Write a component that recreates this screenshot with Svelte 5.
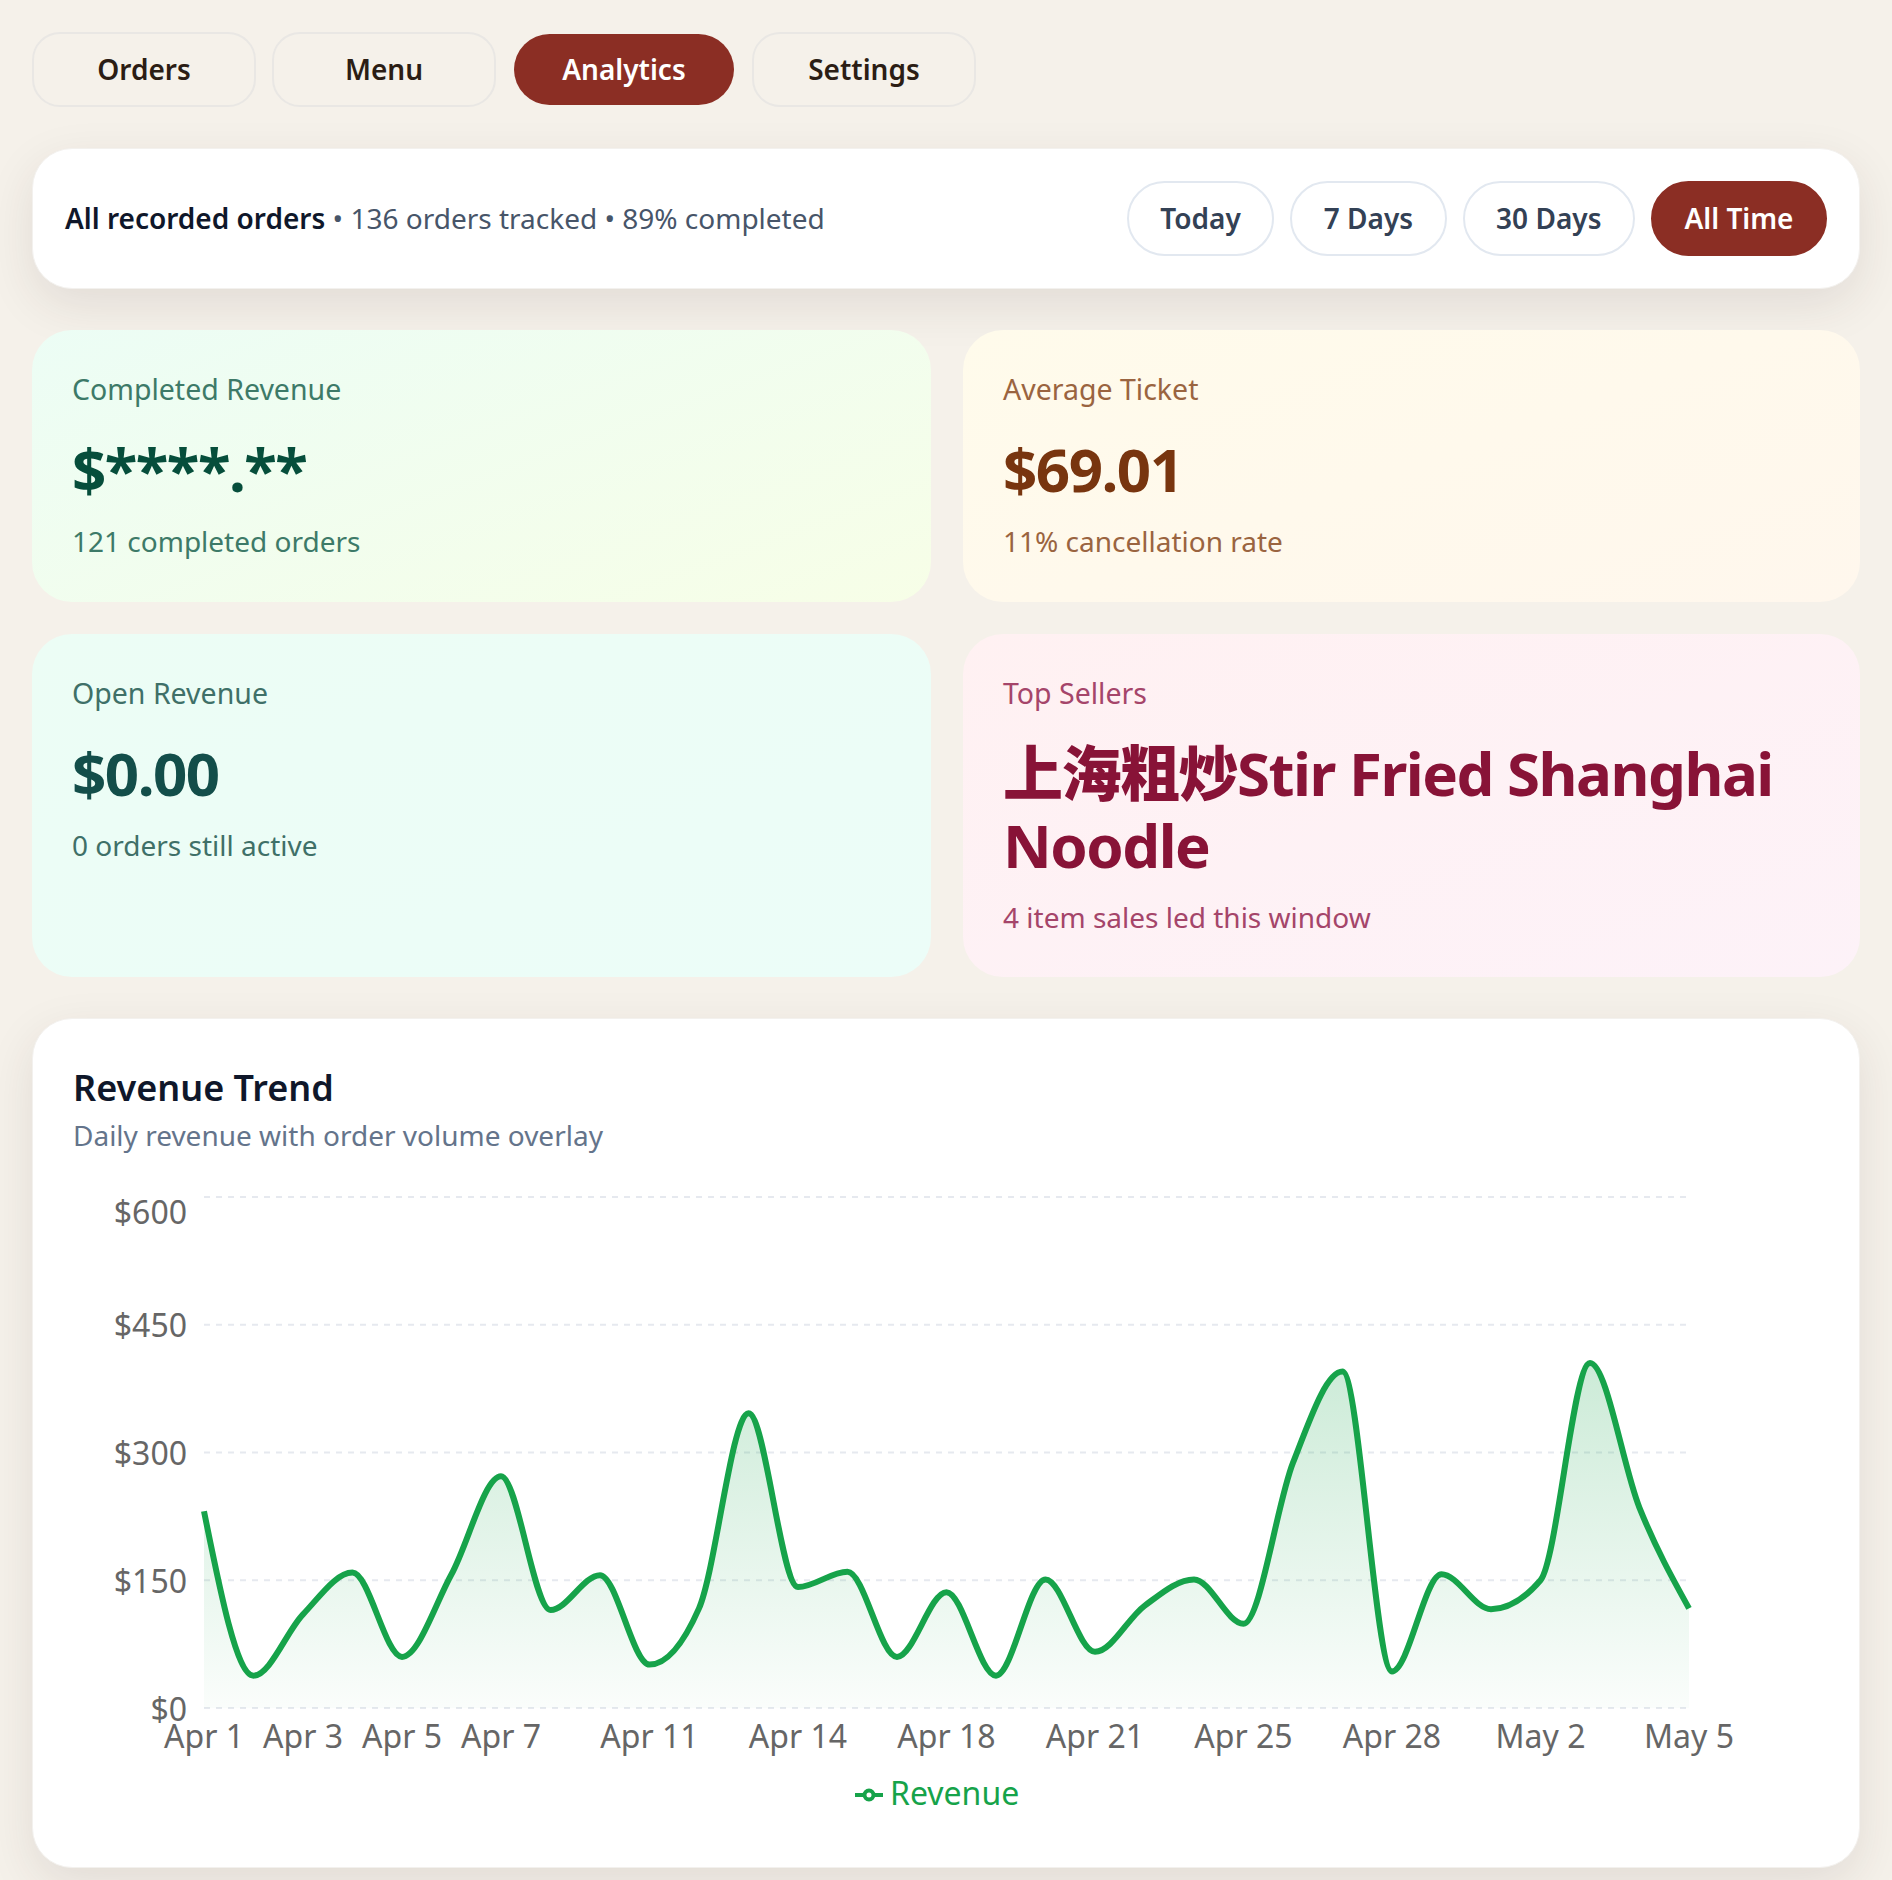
<script lang="ts">
	const tabs = ['Orders', 'Menu', 'Analytics', 'Settings'];
	const ranges = ['Today', '7 Days', '30 Days', 'All Time'];

	// daily revenue, one entry per day that had orders
	const revenue = [
		231, 38, 110, 159, 60, 157, 272, 115, 156, 51, 117, 346, 142, 160, 60, 136, 38, 151, 66, 120,
		151, 99, 288, 395, 43, 157, 116, 150, 405, 235, 117
	];
	const xLabels: Record<number, string> = {
		0: 'Apr 1',
		2: 'Apr 3',
		4: 'Apr 5',
		6: 'Apr 7',
		9: 'Apr 11',
		12: 'Apr 14',
		15: 'Apr 18',
		18: 'Apr 21',
		21: 'Apr 25',
		24: 'Apr 28',
		27: 'May 2',
		30: 'May 5'
	};
	const yTicks = [0, 150, 300, 450, 600];

	const width = 1746;
	const height = 678;
	const left = 131;
	const right = 1616;
	const top = 8;
	const bottom = 519;

	const px = (i: number) => left + ((right - left) * i) / (revenue.length - 1);
	const py = (v: number) => bottom - ((bottom - top) * v) / 600;

	// monotone-x interpolation, same as the curve recharts draws
	function monotonePath(pts: [number, number][]) {
		const n = pts.length;
		const dx = [];
		const m = [];
		for (let i = 0; i < n - 1; i++) {
			dx.push(pts[i + 1][0] - pts[i][0]);
			m.push((pts[i + 1][1] - pts[i][1]) / dx[i]);
		}
		const t = [m[0]];
		for (let i = 1; i < n - 1; i++) {
			if (m[i - 1] * m[i] <= 0) {
				t.push(0);
			} else {
				const p = (m[i - 1] * dx[i] + m[i] * dx[i - 1]) / (dx[i - 1] + dx[i]);
				t.push(
					(Math.sign(m[i - 1]) + Math.sign(m[i])) *
						Math.min(Math.abs(m[i - 1]), Math.abs(m[i]), 0.5 * Math.abs(p))
				);
			}
		}
		t[0] = (3 * m[0] - t[1]) / 2;
		t.push((3 * m[n - 2] - t[n - 2]) / 2);
		let d = `M${pts[0][0]},${pts[0][1]}`;
		for (let i = 0; i < n - 1; i++) {
			const h = dx[i] / 3;
			d += `C${pts[i][0] + h},${pts[i][1] + h * t[i]} ${pts[i + 1][0] - h},${pts[i + 1][1] - h * t[i + 1]} ${pts[i + 1][0]},${pts[i + 1][1]}`;
		}
		return d;
	}

	const line = monotonePath(revenue.map((v, i) => [px(i), py(v)]));
	const area = `${line}L${right},${bottom}L${left},${bottom}Z`;
</script>

<div class="page">
	<nav class="tabs">
		{#each tabs as tab}
			<button class="tab" class:active={tab === 'Analytics'}>{tab}</button>
		{/each}
	</nav>

	<section class="summary">
		<p class="scope"><strong>All recorded orders</strong> • 136 orders tracked • 89% completed</p>
		<div class="ranges">
			{#each ranges as range}
				<button class="range" class:active={range === 'All Time'}>{range}</button>
			{/each}
		</div>
	</section>

	<section class="stats">
		<article class="stat green">
			<div class="label">Completed Revenue</div>
			<div class="value">$****.**</div>
			<div class="note">121 completed orders</div>
		</article>
		<article class="stat amber">
			<div class="label">Average Ticket</div>
			<div class="value">$69.01</div>
			<div class="note">11% cancellation rate</div>
		</article>
		<article class="stat teal">
			<div class="label">Open Revenue</div>
			<div class="value">$0.00</div>
			<div class="note">0 orders still active</div>
		</article>
		<article class="stat pink">
			<div class="label">Top Sellers</div>
			<div class="value"><span class="cjk">上海粗炒</span>Stir Fried Shanghai Noodle</div>
			<div class="note">4 item sales led this window</div>
		</article>
	</section>

	<section class="chart-card">
		<h2>Revenue Trend</h2>
		<p class="sub">Daily revenue with order volume overlay</p>
		<svg class="chart" viewBox="0 0 {width} {height}" width={width} height={height}>
			<defs>
				<linearGradient id="revFill" x1="0" y1="0" x2="0" y2="1">
					<stop offset="0%" stop-color="#16a34a" stop-opacity="0.22" />
					<stop offset="100%" stop-color="#16a34a" stop-opacity="0.02" />
				</linearGradient>
			</defs>
			{#each yTicks as tick}
				<line class="grid" x1={left} x2={right} y1={py(tick)} y2={py(tick)} />
				<text class="tick" x={left - 17} y={tick === 600 ? py(tick) + 14 : py(tick)} text-anchor="end" dominant-baseline="central">${tick}</text>
			{/each}
			<path d={area} fill="url(#revFill)" />
			<path d={line} class="rev-line" />
			{#each Object.entries(xLabels) as [i, label]}
				<text class="tick" x={px(+i)} y={py(0) + 40} text-anchor="middle">{label}</text>
			{/each}
			<g class="legend" transform="translate(782 606)">
				<line x1="0" x2="28" y1="0" y2="0" />
				<circle cx="14" cy="0" r="4.5" />
				<text x="35" y="10">Revenue</text>
			</g>
		</svg>
	</section>
</div>

<style>
	:global(body) {
		margin: 0;
		background: #f5f1ea;
		font-family: 'Noto Sans', 'Noto Sans CJK SC', sans-serif;
	}

	.page {
		padding: 32px;
		display: flex;
		flex-direction: column;
	}

	.tabs {
		display: flex;
		gap: 16px;
		margin-bottom: 41px;
	}

	.tab {
		width: 224px;
		height: 75px;
		padding: 0 0 2px;
		border: 2px solid #e9e7e4;
		border-radius: 28px;
		background: transparent;
		color: #2b1d14;
		font: 600 28px 'Noto Sans', sans-serif;
	}

	.tab.active {
		background: #8b2e24;
		background-clip: padding-box;
		border-color: transparent;
		border-radius: 38px;
		color: #fff;
	}

	.summary {
		display: flex;
		align-items: center;
		justify-content: space-between;
		height: 141px;
		box-sizing: border-box;
		padding: 0 32px;
		background: #fff;
		border: 1px solid #f3f1ee;
		border-radius: 40px;
		box-shadow: 0 16px 48px rgba(62, 39, 35, 0.1);
		margin-bottom: 41px;
	}

	.scope {
		margin: 0 0 2px;
		font-size: 28px;
		color: #475569;
	}

	.scope strong {
		color: #0f172a;
		font-weight: 600;
	}

	.ranges {
		display: flex;
		gap: 16px;
	}

	.range {
		height: 75px;
		padding: 0 31.5px 2px;
		border: 2px solid #e2e8f0;
		border-radius: 38px;
		background: #fff;
		color: #334155;
		font: 600 28px 'Noto Sans', sans-serif;
	}

	.range.active {
		background: #8b2e24;
		border-color: #8b2e24;
		color: #fff;
	}

	.stats {
		display: grid;
		grid-template-columns: 899px 1fr;
		grid-template-rows: 272px auto;
		gap: 32px;
		margin-bottom: 41px;
	}

	.stat {
		padding: 40px;
		border-radius: 40px;
	}

	.label {
		font-size: 28.5px;
		line-height: 38px;
	}

	.value {
		margin: 25px 0 16px;
		font-size: 60px;
		font-weight: 700;
		letter-spacing: -0.025em;
		line-height: 72px;
	}

	.cjk {
		display: inline-block;
		font-weight: 800;
	}

	.note {
		font-size: 28px;
		line-height: 40px;
	}

	.green {
		background: linear-gradient(160deg, #ecfdf5, #f7fee7);
		color: #3d7a68;
	}
	.green .value {
		color: #064e3b;
	}

	.amber {
		background: linear-gradient(160deg, #fffbeb, #fff7ed);
		color: #9a6440;
	}
	.amber .value {
		color: #78350f;
	}

	.teal {
		background: linear-gradient(160deg, #ecfdf5, #ecfdf8);
		color: #3f7068;
	}
	.teal .value {
		color: #134e4a;
	}

	.pink {
		background: linear-gradient(160deg, #fff1f2, #fdf2f8);
		color: #a5456a;
	}
	.pink .value {
		color: #881337;
	}

	.chart-card {
		background: #fff;
		border: 1px solid #f3f1ee;
		border-radius: 40px;
		padding: 44px 40px 0;
		box-shadow: 0 16px 48px rgba(62, 39, 35, 0.1);
	}

	h2 {
		margin: 0 0 4px;
		font-size: 36px;
		font-weight: 600;
		color: #0f172a;
	}

	.sub {
		margin: 0 0 35px;
		font-size: 28px;
		color: #64748b;
	}

	.chart {
		display: block;
	}

	.grid {
		stroke: #e6e9ef;
		stroke-width: 2;
		stroke-dasharray: 6 6;
	}

	.tick {
		font-size: 32px;
		fill: #666;
	}

	.rev-line {
		fill: none;
		stroke: #16a34a;
		stroke-width: 6;
	}

	.legend line {
		stroke: #16a34a;
		stroke-width: 4;
	}

	.legend circle {
		fill: #fff;
		stroke: #16a34a;
		stroke-width: 4;
	}

	.legend text {
		font-size: 32px;
		fill: #16a34a;
	}
</style>
